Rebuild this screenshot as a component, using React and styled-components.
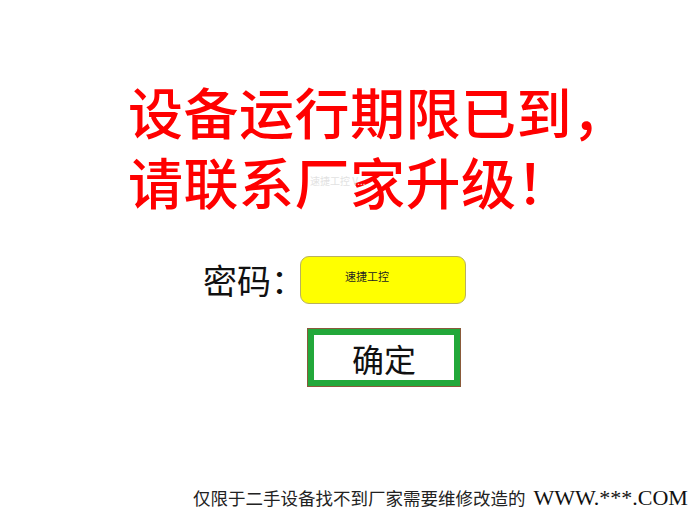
import React from 'react'
import styled, { createGlobalStyle } from 'styled-components'

const GlobalStyle = createGlobalStyle`
    body {
        margin: 0;
        background: #ffffff;
        font-family: "Noto Sans CJK SC", "Liberation Sans", sans-serif;
    }
`

const Page = styled.div`
    width: 700px;
    height: 524px;
    display: flex;
    flex-direction: column;
    overflow: hidden;
`

const Title = styled.h1`
    margin: 75px 0 0 128px;
    font-size: 55px;
    line-height: 70px;
    font-weight: 500;
    color: #ff0000;
    letter-spacing: 0.5px;
    position: relative;
`

const Watermark = styled.span`
    position: absolute;
    left: 182px;
    top: 100px;
    font-size: 10px;
    line-height: 12px;
    font-weight: 400;
    color: #e2e2e2;
    letter-spacing: 0;
`

const PasswordRow = styled.div`
    display: flex;
    align-items: center;
    margin: 41px 0 0 203px;
`

const Label = styled.span`
    font-size: 34px;
    color: #111111;
    line-height: 48px;
    margin-right: -5px;
`

const PasswordBox = styled.div`
    width: 166px;
    height: 48px;
    box-sizing: border-box;
    background: #ffff00;
    border: 1px solid #b8b060;
    border-radius: 9px;
    padding: 11px 0 0 44px;
    font-size: 11px;
    color: #222222;
`

const ConfirmButton = styled.button`
    margin: 25px 0 0 308px;
    width: 152px;
    height: 57px;
    box-sizing: border-box;
    background: #ffffff;
    border: 6px solid #22a83a;
    outline: 1px solid #8a5a3a;
    font-family: "Noto Sans CJK SC", sans-serif;
    font-size: 32px;
    color: #111111;
    padding: 0;
    line-height: 40px;
`

const Footer = styled.div`
    margin-top: auto;
    margin-bottom: 13px;
    margin-left: 193px;
    display: flex;
    align-items: baseline;
    gap: 8px;
`

const Notice = styled.span`
    font-size: 17.5px;
    color: #222222;
`

const Site = styled.span`
    font-family: "Liberation Serif", serif;
    font-size: 22px;
    color: #111111;
`

export default function App() {
    return (
        <Page>
            <GlobalStyle />
            <Title>
                设备运行期限已到，<br />
                请联系厂家升级！
                <Watermark>速捷工控 V...</Watermark>
            </Title>
            <PasswordRow>
                <Label>密码：</Label>
                <PasswordBox>速捷工控</PasswordBox>
            </PasswordRow>
            <ConfirmButton>确定</ConfirmButton>
            <Footer>
                <Notice>仅限于二手设备找不到厂家需要维修改造的</Notice>
                <Site>WWW.***.COM</Site>
            </Footer>
        </Page>
    )
}
